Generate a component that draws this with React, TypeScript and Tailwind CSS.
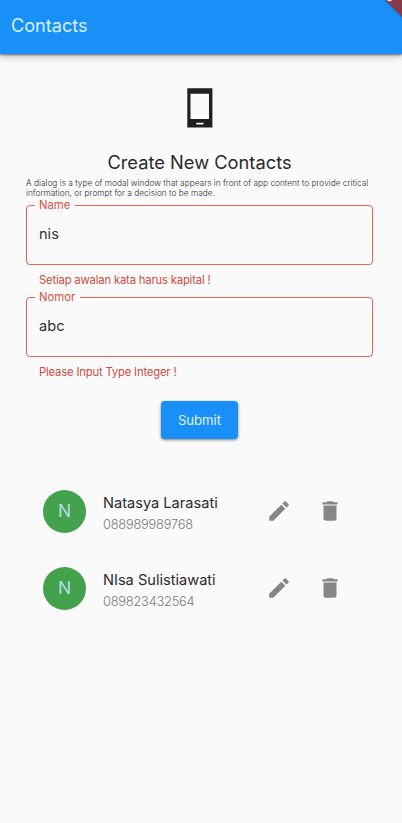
import React from 'react';

function PhoneIcon() {
  return (
    <svg className="h-10 w-[26px]" viewBox="0 0 26 40">
      <path
        fill="#202020"
        fillRule="evenodd"
        d="M0.3 0.3H25.4V39.6H0.3ZM3.5 5.8V30.9H22V5.8ZM9.3 34.7V36.4H16.5V34.7Z"
      />
    </svg>
  );
}

function EditIcon() {
  return (
    <svg className="size-[26px]" viewBox="0 0 24 24" fill="#868686">
      <path d="M3 17.25V21h3.75L17.81 9.94l-3.75-3.75L3 17.25zM20.71 7.04c.39-.39.39-1.02 0-1.41l-2.34-2.34a.9959.9959 0 0 0-1.41 0l-1.83 1.83 3.75 3.75 1.83-1.83z" />
    </svg>
  );
}

function DeleteIcon() {
  return (
    <svg className="size-[26px]" viewBox="0 0 24 24" fill="#868686">
      <path d="M6 19c0 1.1.9 2 2 2h8c1.1 0 2-.9 2-2V7H6v12zM19 4h-3.5l-1-1h-5l-1 1H5v2h14V4z" />
    </svg>
  );
}

type FieldProps = { label: string; value: string; error: string };

function Field({ label, value, error }: FieldProps) {
  return (
    <div className="h-[92px]">
      <div className="relative flex h-[60px] items-center rounded-[4px] border border-[#d86e60] pb-[2px] pl-3 shadow-[0_0_1px_rgba(220,90,75,0.6)]">
        <span className="absolute -top-[8px] left-[8px] bg-[#fafafa] pr-[5px] pl-[4px] text-[11.3px] leading-[14px] text-[#dc4f41]">
          {label}
        </span>
        <span className="text-[14.6px] leading-5 text-[#303030]">{value}</span>
      </div>
      <p className="pt-[7px] pl-[13px] text-[11.3px] leading-4 tracking-[-0.19px] whitespace-nowrap text-[#cf4c40]">
        {error}
      </p>
    </div>
  );
}

type ContactProps = { name: string; phone: string };

function Contact({ name, phone }: ContactProps) {
  return (
    <li className="flex h-[77px] items-center">
      <div className="flex size-[43px] items-center justify-center rounded-full bg-[#43a24b] text-[17.5px] text-[#b5dcea]">
        N
      </div>
      <div className="ml-[17px] w-[162.5px] pt-[5px] whitespace-nowrap">
        <p className="text-[14.6px] leading-[21px] text-[#2b2b2b]">{name}</p>
        <p className="text-[12.8px] leading-[21px] font-[350] tracking-[-0.2px] text-[#7c7c7c]">{phone}</p>
      </div>
      <EditIcon />
      <span className="ml-[25.3px]">
        <DeleteIcon />
      </span>
    </li>
  );
}

export default function App() {
  return (
    <div className="relative h-[823px] w-[402px] overflow-hidden bg-[#fafafa] font-['Inter',sans-serif]">
      <header className="flex h-[54px] items-center bg-[#1890f8] pl-[11px] shadow-[0_1px_2px_rgba(0,0,0,0.5),0_3px_7px_rgba(0,0,0,0.22)]">
        <h1 className="pb-[4px] text-[18.1px] leading-6 text-[#d9f1ff]">Contacts</h1>
      </header>
      <svg className="absolute top-0 right-0 h-[24px] w-[32px]" viewBox="0 0 32 24">
        <defs>
          <filter id="ribbonShadow" x="-50%" y="-50%" width="200%" height="200%">
            <feGaussianBlur stdDeviation="1.5" />
          </filter>
        </defs>
        <path d="M12 -4L36 20V-4Z" fill="#123c70" opacity=".7" filter="url(#ribbonShadow)" />
        <path d="M15 0L32 17V0Z" fill="#873a4c" />
        <path d="M17 0h5l-1 1.2h-3z" fill="#f4e9ec" />
      </svg>

      <main className="pr-[29px] pl-[26px]">
        <div className="flex justify-center pt-[34px]">
          <PhoneIcon />
        </div>
        <h2 className="mt-[22px] text-center text-[18.3px] leading-6 whitespace-nowrap text-[#2b2b2b]">
          Create New Contacts
        </h2>
        <p className="mt-1 h-[27px] text-[8.3px] leading-[10px] font-[350] tracking-[0.01px] whitespace-nowrap text-[#303030]">
          A dialog is a type of modal window that appears in front of app content to provide critical
          <br />
          information, or prompt for a decision to be made.
        </p>
        <Field label="Name" value="nis" error="Setiap awalan kata harus kapital !" />
        <Field label="Nomor" value="abc" error="Please Input Type Integer !" />
        <div className="mt-[12px] flex justify-center">
          <button className="h-[38px] w-[77px] rounded-[4px] bg-[#1890f8] pt-[2px] text-[13.1px] text-[#e0f4ff] shadow-[0_1px_3px_rgba(0,0,0,0.5)]">
            Submit
          </button>
        </div>
        <ul className="mt-[33.5px] pl-[17px]">
          <Contact name="Natasya Larasati" phone="088989989768" />
          <Contact name="NIsa Sulistiawati" phone="089823432564" />
        </ul>
      </main>
    </div>
  );
}
